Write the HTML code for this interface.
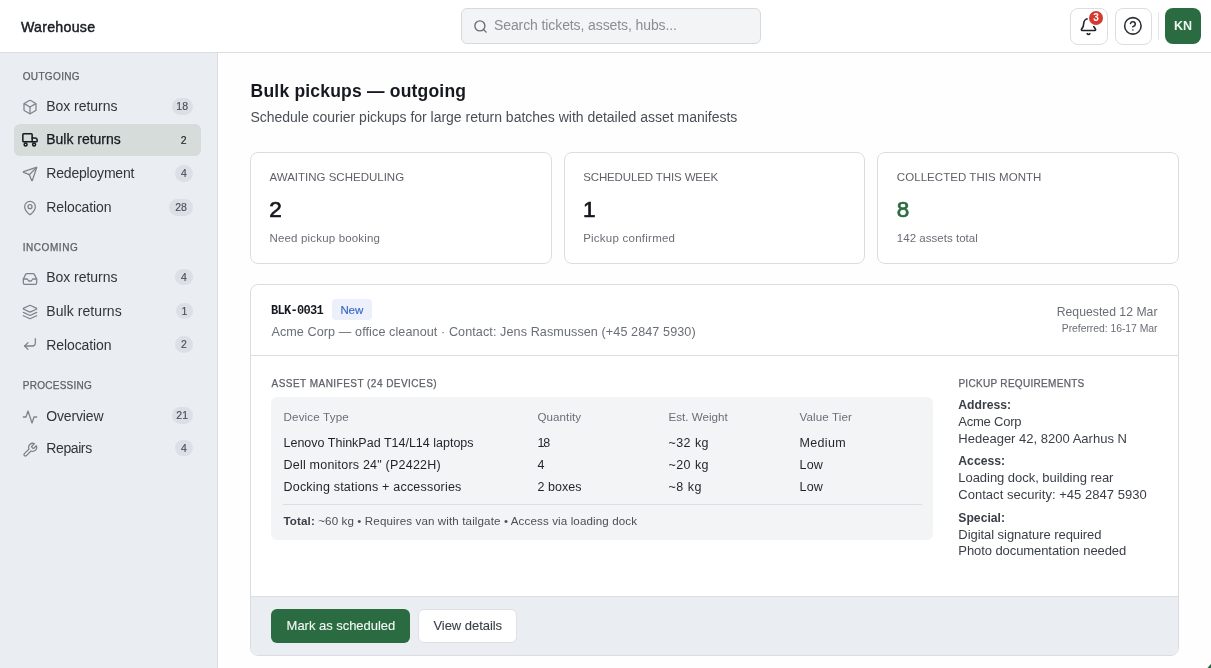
<!DOCTYPE html>
<html><head><meta charset="utf-8">
<style>
*{box-sizing:border-box;margin:0;padding:0}
html,body{width:1211px;height:668px;overflow:hidden;background:#fefefe;font-family:"Liberation Sans",sans-serif;color:#1f2329}
.abs{position:absolute}
#wrap{position:absolute;left:0;top:0;width:1211px;height:668px;overflow:hidden;will-change:transform}
.t{position:absolute;white-space:nowrap;line-height:1}
#hdr{position:absolute;left:0;top:0;width:1211px;height:53px;background:#fff;border-bottom:1px solid #dcdde0}
#side{position:absolute;left:0;top:53px;width:218px;height:615px;background:#eaedf2;border-right:1px solid #d9dce1}
.sec{position:absolute;left:22.5px;font-size:10.8px;font-weight:bold;color:#6a6e76;letter-spacing:-0.1px}
.nav{position:absolute;left:14px;width:187px;height:32px;border-radius:6px}
.nav.act{background:#d5dcda}
.card{position:absolute;background:#fff;border:1px solid #dbdcdf;border-radius:8px}
</style></head><body><div id="wrap">
<div id="hdr">
  <div class="t" style="left:21px;top:20.0px;font-size:14.2px;color:#1a1d23;letter-spacing:0.25px;-webkit-text-stroke:0.45px #1a1d23">Warehouse</div>
  <div class="abs" style="left:461px;top:8px;width:300px;height:36px;background:#f3f4f6;border:1px solid #d8d9dc;border-radius:6px">
    <svg class="abs" style="left:11px;top:9.5px" width="15" height="15" viewBox="0 0 24 24" fill="none" stroke="#6a6e76" stroke-width="2.2" stroke-linecap="round"><circle cx="11" cy="11" r="8"/><path d="M21 21l-4.3-4.3"/></svg>
    <div class="t" style="left:32px;top:9.2px;font-size:14px;color:#8a8d93;letter-spacing:-0.1px">Search tickets, assets, hubs...</div>
  </div>
  <div class="abs" style="left:1070px;top:7.5px;width:37.5px;height:37px;border:1px solid #dcdde1;border-radius:8px;background:#fff">
    <svg class="abs" style="left:8px;top:8px" width="19" height="19" viewBox="0 0 24 24" fill="none" stroke="#1f2329" stroke-width="2" stroke-linecap="round" stroke-linejoin="round"><path d="M10.268 21a2 2 0 0 0 3.464 0"/><path d="M3.262 15.326A1 1 0 0 0 4 17h16a1 1 0 0 0 .74-1.673C19.410 13.956 18 12.499 18 8A6 6 0 0 0 6 8c0 4.499-1.411 5.956-2.738 7.326"/></svg>
    <div class="abs" style="left:18px;top:2.5px;width:14px;height:14px;border-radius:50%;background:#d43b30;box-shadow:0 0 0 1.5px #fff;color:#fff;font-size:10px;font-weight:bold;text-align:center;line-height:14px">3</div>
  </div>
  <div class="abs" style="left:1114.5px;top:7.5px;width:37px;height:37px;border:1px solid #dcdde1;border-radius:8px;background:#fff">
    <svg class="abs" style="left:7.6px;top:7.5px" width="19.75" height="19.75" viewBox="0 0 24 24" fill="none" stroke="#2a2e35" stroke-width="1.9" stroke-linecap="round" stroke-linejoin="round"><circle cx="12" cy="12" r="10"/><path d="M9.09 9a3 3 0 0 1 5.83 1c0 2-3 3-3 3"/><path d="M12 17h.01"/></svg>
  </div>
  <div class="abs" style="left:1158px;top:12px;width:1px;height:28px;background:#e3e5e9"></div>
  <div class="abs" style="left:1165px;top:8px;width:36px;height:36px;border-radius:8px;background:#2a6b41;color:#eef7ef;font-size:12.5px;font-weight:bold;text-align:center;line-height:36px">KN</div>
</div>

<div id="side"></div>
<div class="t" style="left:22.70px;top:72.13px;font-size:10px;color:#5e6269;letter-spacing:0.358px;-webkit-text-stroke:0.25px #5e6269;">OUTGOING</div>
<div class="nav" style="top:90.33px"></div>
<svg class="abs" style="left:22px;top:99.03px" width="16" height="16" viewBox="0 0 24 24" fill="none" stroke="#7d838c" stroke-width="1.9" stroke-linecap="round" stroke-linejoin="round"><path d="M21 8a2 2 0 0 0-1-1.73l-7-4a2 2 0 0 0-2 0l-7 4A2 2 0 0 0 3 8v8a2 2 0 0 0 1 1.730l7 4a2 2 0 0 0 2 0l7-4A2 2 0 0 0 21 16Z"/><path d="m3.3 7 8.7 5 8.7-5"/><path d="M12 22V12"/></svg>
<div class="t" style="left:46.30px;top:98.75px;font-size:14px;color:#31353c;letter-spacing:-0.050px;">Box returns</div>
<div class="abs" style="left:171.70px;top:98.03px;width:21px;height:16.5px;border-radius:9px;background:#dcdfe5"></div>
<div class="t" style="left:182.20px;top:101.34px;font-size:10.5px;color:#4a4f57;-webkit-text-stroke:0.15px #4a4f57;transform:translateX(-50%);">18</div>
<div class="nav act" style="top:124.00px"></div>
<svg class="abs" style="left:19px;top:130.00px" width="22" height="20" viewBox="19 130 22 20" fill="none" stroke="#15181e" stroke-width="1.5" stroke-linecap="round" stroke-linejoin="round"><path d="M22.85 134.6a0.75 0.75 0 0 1 0.75-0.75H31.4a0.75 0.75 0 0 1 0.75 0.75V141.85H23.6a0.75 0.75 0 0 1-0.75-0.75Z"/><path d="M32.15 137.95H35a2.15 2.15 0 0 1 2.15 2.15V141.1a0.75 0.75 0 0 1-0.75 0.75H32.15"/><circle cx="25.6" cy="144.5" r="1.45" fill="#d5dcda"/><circle cx="34.1" cy="144.5" r="1.45" fill="#d5dcda"/></svg>
<div class="t" style="left:46.30px;top:132.42px;font-size:14px;color:#15181e;letter-spacing:-0.026px;-webkit-text-stroke:0.25px #15181e;">Bulk returns</div>
<div class="t" style="left:183.70px;top:135.21px;font-size:10.5px;color:#1f2329;-webkit-text-stroke:0.15px #1f2329;transform:translateX(-50%);">2</div>
<div class="nav" style="top:157.67px"></div>
<svg class="abs" style="left:22px;top:166.37px" width="16" height="16" viewBox="0 0 24 24" fill="none" stroke="#7d838c" stroke-width="1.9" stroke-linecap="round" stroke-linejoin="round"><path d="M14.536 21.686a.5.5 0 0 0 .937-.024l6.5-19a.496.496 0 0 0-.635-.635l-19 6.5a.5.5 0 0 0-.024.937l7.93 3.18a2 2 0 0 1 1.112 1.11z"/><path d="m21.854 2.147-10.94 10.939"/></svg>
<div class="t" style="left:46.30px;top:166.09px;font-size:14px;color:#31353c;letter-spacing:-0.195px;">Redeployment</div>
<div class="abs" style="left:175.20px;top:165.07px;width:17.5px;height:16.5px;border-radius:9px;background:#dcdfe5"></div>
<div class="t" style="left:183.95px;top:168.38px;font-size:10.5px;color:#4a4f57;-webkit-text-stroke:0.15px #4a4f57;transform:translateX(-50%);">4</div>
<div class="nav" style="top:191.33px"></div>
<svg class="abs" style="left:22px;top:200.03px" width="16" height="16" viewBox="0 0 24 24" fill="none" stroke="#7d838c" stroke-width="1.9" stroke-linecap="round" stroke-linejoin="round"><path d="M20 10c0 4.993-5.539 10.193-7.399 11.799a1 1 0 0 1-1.202 0C9.539 20.193 4 14.993 4 10a8 8 0 0 1 16 0"/><circle cx="12" cy="10" r="3"/></svg>
<div class="t" style="left:46.30px;top:199.75px;font-size:14px;color:#31353c;letter-spacing:-0.096px;">Relocation</div>
<div class="abs" style="left:169.30px;top:199.03px;width:23.4px;height:16.5px;border-radius:9px;background:#dcdfe5"></div>
<div class="t" style="left:181.00px;top:202.34px;font-size:10.5px;color:#4a4f57;-webkit-text-stroke:0.15px #4a4f57;transform:translateX(-50%);">28</div>
<div class="t" style="left:22.70px;top:242.53px;font-size:10px;color:#5e6269;letter-spacing:0.571px;-webkit-text-stroke:0.25px #5e6269;">INCOMING</div>
<div class="nav" style="top:261.93px"></div>
<svg class="abs" style="left:22px;top:270.63px" width="16" height="16" viewBox="0 0 24 24" fill="none" stroke="#7d838c" stroke-width="1.9" stroke-linecap="round" stroke-linejoin="round"><polyline points="22 12 16 12 14 15 10 15 8 12 2 12"/><path d="M5.45 5.11 2 12v6a2 2 0 0 0 2 2h16a2 2 0 0 0 2-2v-6l-3.45-6.89A2 2 0 0 0 16.76 4H7.24a2 2 0 0 0-1.79 1.11z"/></svg>
<div class="t" style="left:46.30px;top:270.35px;font-size:14px;color:#31353c;letter-spacing:-0.050px;">Box returns</div>
<div class="abs" style="left:175.20px;top:268.83px;width:17.5px;height:16.5px;border-radius:9px;background:#dcdfe5"></div>
<div class="t" style="left:183.95px;top:272.14px;font-size:10.5px;color:#4a4f57;-webkit-text-stroke:0.15px #4a4f57;transform:translateX(-50%);">4</div>
<div class="nav" style="top:295.60px"></div>
<svg class="abs" style="left:22px;top:304.30px" width="16" height="16" viewBox="0 0 24 24" fill="none" stroke="#7d838c" stroke-width="1.9" stroke-linecap="round" stroke-linejoin="round"><path d="m12.83 2.18a2 2 0 0 0-1.66 0L2.6 6.08a1 1 0 0 0 0 1.83l8.58 3.91a2 2 0 0 0 1.66 0l8.58-3.9a1 1 0 0 0 0-1.83Z"/><path d="m22 17.65-9.17 4.16a2 2 0 0 1-1.66 0L2 17.65"/><path d="m22 12.65-9.17 4.16a2 2 0 0 1-1.66 0L2 12.65"/></svg>
<div class="t" style="left:46.30px;top:304.02px;font-size:14px;color:#31353c;letter-spacing:0.065px;">Bulk returns</div>
<div class="abs" style="left:176.20px;top:302.50px;width:16.5px;height:16.5px;border-radius:9px;background:#dcdfe5"></div>
<div class="t" style="left:184.45px;top:305.81px;font-size:10.5px;color:#4a4f57;-webkit-text-stroke:0.15px #4a4f57;transform:translateX(-50%);">1</div>
<div class="nav" style="top:329.26px"></div>
<svg class="abs" style="left:22px;top:336.46px" width="16" height="16" viewBox="0 0 24 24" fill="none" stroke="#7d838c" stroke-width="1.9" stroke-linecap="round" stroke-linejoin="round"><polyline points="9 10 4 15 9 20"/><path d="M20 4v7a4 4 0 0 1-4 4H4"/></svg>
<div class="t" style="left:46.30px;top:337.68px;font-size:14px;color:#31353c;letter-spacing:-0.096px;">Relocation</div>
<div class="abs" style="left:175.20px;top:336.16px;width:17.5px;height:16.5px;border-radius:9px;background:#dcdfe5"></div>
<div class="t" style="left:183.95px;top:339.47px;font-size:10.5px;color:#4a4f57;-webkit-text-stroke:0.15px #4a4f57;transform:translateX(-50%);">2</div>
<div class="t" style="left:22.70px;top:380.53px;font-size:10px;color:#5e6269;letter-spacing:0.277px;-webkit-text-stroke:0.25px #5e6269;">PROCESSING</div>
<div class="nav" style="top:400.13px"></div>
<svg class="abs" style="left:22px;top:408.83px" width="16" height="16" viewBox="0 0 24 24" fill="none" stroke="#7d838c" stroke-width="1.9" stroke-linecap="round" stroke-linejoin="round"><path d="M22 12h-4l-3 9L9 3l-3 9H2"/></svg>
<div class="t" style="left:46.30px;top:408.55px;font-size:14px;color:#31353c;letter-spacing:-0.156px;">Overview</div>
<div class="abs" style="left:171.70px;top:407.03px;width:21px;height:16.5px;border-radius:9px;background:#dcdfe5"></div>
<div class="t" style="left:182.20px;top:410.34px;font-size:10.5px;color:#4a4f57;-webkit-text-stroke:0.15px #4a4f57;transform:translateX(-50%);">21</div>
<div class="nav" style="top:433.03px"></div>
<svg class="abs" style="left:22px;top:441.73px" width="16" height="16" viewBox="0 0 24 24" fill="none" stroke="#7d838c" stroke-width="1.9" stroke-linecap="round" stroke-linejoin="round"><path d="M14.7 6.3a1 1 0 0 0 0 1.4l1.6 1.6a1 1 0 0 0 1.4 0l3.77-3.77a6 6 0 0 1-7.94 7.94l-6.91 6.91a2.12 2.12 0 0 1-3-3l6.91-6.91a6 6 0 0 1 7.94-7.940l-3.76 3.76z"/></svg>
<div class="t" style="left:46.30px;top:441.45px;font-size:14px;color:#31353c;letter-spacing:-0.402px;">Repairs</div>
<div class="abs" style="left:175.20px;top:439.93px;width:17.5px;height:16.5px;border-radius:9px;background:#dcdfe5"></div>
<div class="t" style="left:183.95px;top:443.24px;font-size:10.5px;color:#4a4f57;-webkit-text-stroke:0.15px #4a4f57;transform:translateX(-50%);">4</div>


<div class="t" style="left:250.60px;top:82.68px;font-size:17.5px;color:#15181e;font-weight:bold;letter-spacing:0.201px;">Bulk pickups — outgoing</div>
<div class="t" style="left:250.40px;top:109.65px;font-size:14px;color:#4a4f57;letter-spacing:-0.013px;">Schedule courier pickups for large return batches with detailed asset manifests</div>
<div class="card" style="left:250.00px;top:152px;width:301.67px;height:112px"></div>
<div class="t" style="left:269.50px;top:172.16px;font-size:11.5px;color:#5e6269;">AWAITING SCHEDULING</div>
<div class="t" style="left:269.30px;top:198.85px;font-size:22.5px;color:#15181e;-webkit-text-stroke:0.7px #15181e;">2</div>
<div class="t" style="left:269.50px;top:232.56px;font-size:11.5px;color:#6a6e76;letter-spacing:0.170px;">Need pickup booking</div>
<div class="card" style="left:563.67px;top:152px;width:301.67px;height:112px"></div>
<div class="t" style="left:583.17px;top:172.16px;font-size:11.5px;color:#5e6269;letter-spacing:-0.122px;">SCHEDULED THIS WEEK</div>
<div class="t" style="left:582.97px;top:198.85px;font-size:22.5px;color:#15181e;-webkit-text-stroke:0.7px #15181e;">1</div>
<div class="t" style="left:583.17px;top:232.56px;font-size:11.5px;color:#6a6e76;letter-spacing:0.243px;">Pickup confirmed</div>
<div class="card" style="left:877.33px;top:152px;width:301.67px;height:112px"></div>
<div class="t" style="left:896.83px;top:172.16px;font-size:11.5px;color:#5e6269;letter-spacing:0.053px;">COLLECTED THIS MONTH</div>
<div class="t" style="left:896.63px;top:198.85px;font-size:22.5px;color:#2b6a3d;-webkit-text-stroke:0.7px #2b6a3d;">8</div>
<div class="t" style="left:896.83px;top:232.56px;font-size:11.5px;color:#6a6e76;letter-spacing:0.029px;">142 assets total</div>
<div class="card" style="left:250px;top:284px;width:929px;height:372px;overflow:hidden"><div class="abs" style="left:0;top:311px;width:927px;height:59px;background:#eaedf2;border-top:1px solid #dcdee2"></div><div class="abs" style="left:0;top:70px;width:927px;height:1px;background:#dcdee2"></div></div>
<div class="t" style="left:271.00px;top:305.10px;font-size:12px;color:#15181e;font-weight:bold;letter-spacing:-0.718px;font-family:'Liberation Mono',monospace;">BLK-0031</div>
<div class="abs" style="left:332px;top:299.3px;width:39.5px;height:21px;border-radius:4px;background:#ebf0fb"></div>
<div class="t" style="left:340.40px;top:305.36px;font-size:11.5px;color:#3a68c4;letter-spacing:-0.100px;-webkit-text-stroke:0.15px #3a68c4;">New</div>
<div class="t" style="left:271.40px;top:326.13px;font-size:12.6px;color:#6a6e76;letter-spacing:0.091px;">Acme Corp — office cleanout · Contact: Jens Rasmussen (+45 2847 5930)</div>
<div class="t" style="right:53.50px;top:306.37px;font-size:12.2px;color:#6a6e76;letter-spacing:0.033px;">Requested 12 Mar</div>
<div class="t" style="right:53.50px;top:323.90px;font-size:10.4px;color:#6a6e76;letter-spacing:-0.036px;">Preferred: 16-17 Mar</div>
<div class="t" style="left:271.60px;top:378.53px;font-size:10px;color:#5e6269;letter-spacing:0.462px;-webkit-text-stroke:0.25px #5e6269;">ASSET MANIFEST (24 DEVICES)</div>
<div class="abs" style="left:271px;top:397px;width:662px;height:143px;border-radius:6px;background:#f3f4f6"></div>
<div class="t" style="left:283.50px;top:411.38px;font-size:11.6px;color:#6a6e76;letter-spacing:0.160px;">Device Type</div>
<div class="t" style="left:537.40px;top:411.38px;font-size:11.6px;color:#6a6e76;letter-spacing:0.081px;">Quantity</div>
<div class="t" style="left:668.40px;top:411.38px;font-size:11.6px;color:#6a6e76;letter-spacing:0.020px;">Est. Weight</div>
<div class="t" style="left:799.50px;top:411.38px;font-size:11.6px;color:#6a6e76;letter-spacing:0.111px;">Value Tier</div>
<div class="t" style="left:283.50px;top:436.72px;font-size:12.5px;color:#1f2329;letter-spacing:0.004px;">Lenovo ThinkPad T14/L14 laptops</div>
<div class="t" style="left:537.40px;top:436.72px;font-size:12.5px;color:#1f2329;letter-spacing:-1.200px;">18</div>
<div class="t" style="left:668.40px;top:436.72px;font-size:12.5px;color:#1f2329;letter-spacing:0.460px;">~32 kg</div>
<div class="t" style="left:799.50px;top:436.72px;font-size:12.5px;color:#1f2329;letter-spacing:0.340px;">Medium</div>
<div class="t" style="left:283.50px;top:458.72px;font-size:12.5px;color:#1f2329;letter-spacing:0.216px;">Dell monitors 24" (P2422H)</div>
<div class="t" style="left:537.40px;top:458.72px;font-size:12.5px;color:#1f2329;">4</div>
<div class="t" style="left:668.40px;top:458.72px;font-size:12.5px;color:#1f2329;letter-spacing:0.460px;">~20 kg</div>
<div class="t" style="left:799.50px;top:458.72px;font-size:12.5px;color:#1f2329;letter-spacing:0.200px;">Low</div>
<div class="t" style="left:283.50px;top:480.72px;font-size:12.5px;color:#1f2329;letter-spacing:0.201px;">Docking stations + accessories</div>
<div class="t" style="left:537.40px;top:480.72px;font-size:12.5px;color:#1f2329;letter-spacing:0.069px;">2 boxes</div>
<div class="t" style="left:668.40px;top:480.72px;font-size:12.5px;color:#1f2329;letter-spacing:0.525px;">~8 kg</div>
<div class="t" style="left:799.50px;top:480.72px;font-size:12.5px;color:#1f2329;letter-spacing:0.200px;">Low</div>
<div class="abs" style="left:283px;top:504px;width:639px;height:1px;background:#dcdee3"></div>
<div class="t" style="left:283.50px;top:515.18px;font-size:11.6px;color:#4a4f57;letter-spacing:0.113px;"><b style="color:#3a3f47">Total:</b> ~60 kg • Requires van with tailgate • Access via loading dock</div>
<div class="t" style="left:958.40px;top:378.53px;font-size:10px;color:#5e6269;letter-spacing:0.305px;-webkit-text-stroke:0.25px #5e6269;">PICKUP REQUIREMENTS</div>
<div class="t" style="left:958.30px;top:398.67px;font-size:12.2px;color:#3a3f47;font-weight:bold;">Address:</div>
<div class="t" style="left:958.30px;top:414.99px;font-size:13px;color:#3a3f47;letter-spacing:-0.225px;">Acme Corp</div>
<div class="t" style="left:958.30px;top:431.99px;font-size:13px;color:#3a3f47;letter-spacing:0.008px;">Hedeager 42, 8200 Aarhus N</div>
<div class="t" style="left:958.30px;top:455.27px;font-size:12.2px;color:#3a3f47;font-weight:bold;">Access:</div>
<div class="t" style="left:958.30px;top:470.79px;font-size:13px;color:#3a3f47;letter-spacing:-0.038px;">Loading dock, building rear</div>
<div class="t" style="left:958.30px;top:487.79px;font-size:13px;color:#3a3f47;letter-spacing:0.027px;">Contact security: +45 2847 5930</div>
<div class="t" style="left:958.30px;top:512.47px;font-size:12.2px;color:#3a3f47;font-weight:bold;">Special:</div>
<div class="t" style="left:958.30px;top:527.59px;font-size:13px;color:#3a3f47;letter-spacing:-0.052px;">Digital signature required</div>
<div class="t" style="left:958.30px;top:544.19px;font-size:13px;color:#3a3f47;letter-spacing:-0.076px;">Photo documentation needed</div>
<div class="abs" style="left:271px;top:609px;width:139px;height:34px;border-radius:6px;background:#2a6b41"></div>
<div class="t" style="left:286.60px;top:619.09px;font-size:13px;color:#f4faf5;letter-spacing:-0.031px;-webkit-text-stroke:0.1px #f4faf5;">Mark as scheduled</div>
<div class="abs" style="left:418px;top:609px;width:99px;height:34px;border-radius:6px;background:#fff;border:1px solid #dfe1e5"></div>
<div class="t" style="left:433.40px;top:619.09px;font-size:13px;color:#3a3f47;letter-spacing:-0.039px;-webkit-text-stroke:0.1px #3a3f47;">View details</div>
<div class="abs" style="left:1203.2px;top:657.7px;width:48px;height:48px;border-radius:50%;background:#2a6b41"></div>

</div></body></html>
